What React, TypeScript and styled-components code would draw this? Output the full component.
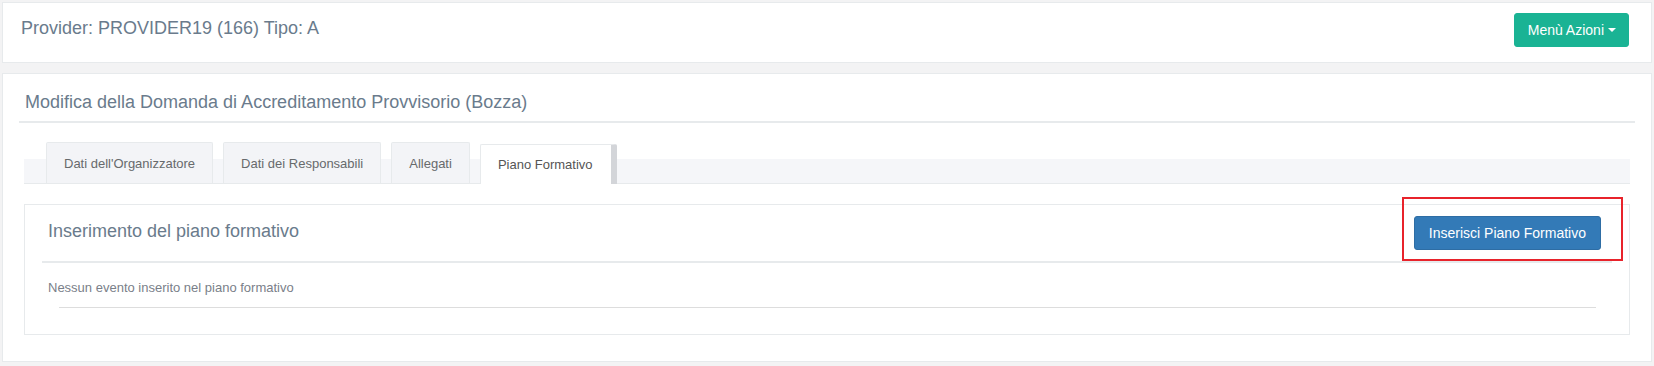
import React, { useState } from 'react';
import styled, { createGlobalStyle } from 'styled-components';

const GlobalStyle = createGlobalStyle`
  html, body {
    margin: 0;
    padding: 0;
    background: #f3f3f4;
  }
  body {
    font-family: 'Liberation Sans', Arial, sans-serif;
  }
`;

const Page = styled.div`
  padding: 2px 2px 0;
`;

const Box = styled.div`
  background: #fff;
  border: 1px solid #e7eaec;
  box-sizing: border-box;
`;

const TopBar = styled(Box)`
  height: 61px;
  display: flex;
  justify-content: space-between;
  align-items: flex-start;
  padding: 10px 22px 0 18px;
`;

const Heading = styled.div`
  font-size: 18px;
  line-height: 20px;
  color: #6a7b8c;
  margin-top: 5px;
`;

const MenuButton = styled.button`
  display: flex;
  align-items: center;
  height: 34px;
  padding: 0 12px 0 13px;
  background: #1ab394;
  border: 1px solid #1ab394;
  border-radius: 3px;
  color: #fff;
  font-family: inherit;
  font-size: 14px;
  cursor: pointer;
`;

const Caret = styled.span`
  display: inline-block;
  margin-left: 4px;
  border-top: 4px solid #fff;
  border-left: 4px solid transparent;
  border-right: 4px solid transparent;
`;

const MainBox = styled(Box)`
  margin-top: 10px;
  padding: 0 16px 26px;
`;

const MainHeader = styled.div`
  padding: 18px 6px 0;
  margin-bottom: 9px;
`;

const Rule = styled.div`
  height: 2px;
  background: #e7eaec;
`;

const TabArea = styled.div`
  margin: 19px 5px 0;
`;

const TabBar = styled.div`
  display: flex;
  align-items: flex-end;
  height: 41px;
  padding-left: 22px;
  background: linear-gradient(to bottom, transparent 17px, #f5f6f9 17px);
  border-bottom: 1px solid #e7eaec;
`;

const Tab = styled.div<{ $active?: boolean }>`
  display: flex;
  align-items: center;
  box-sizing: border-box;
  margin-right: 10px;
  padding: 0 ${(p) => (p.$active ? '18px' : '17px')} 0 17px;
  font-size: 13px;
  cursor: pointer;
  border: 1px solid #e7eaec;
  border-bottom: none;
  border-radius: 2px 2px 0 0;
  height: ${(p) => (p.$active ? '40px' : '41px')};
  margin-bottom: ${(p) => (p.$active ? '-1px' : '0')};
  background: ${(p) => (p.$active ? '#fff' : '#f3f4f7')};
  color: ${(p) => (p.$active ? '#555' : '#676a6c')};
  border-right: ${(p) => (p.$active ? '6px solid #d3d5d9' : '1px solid #e7eaec')};
`;

const Section = styled(Box)`
  margin-top: 20px;
  padding: 0 17px;
`;

const SectionHeader = styled.div`
  display: flex;
  justify-content: space-between;
  align-items: flex-start;
  padding: 11px 11px 11px 6px;
`;

const ButtonWrap = styled.div`
  position: relative;
`;

const Highlight = styled.div`
  position: absolute;
  top: -19px;
  left: -12px;
  right: -22px;
  bottom: -11px;
  border: 2px solid #e8232b;
  pointer-events: none;
`;

const PrimaryButton = styled.button`
  height: 34px;
  padding: 0 14px;
  background: #337ab7;
  border: 1px solid #2e6da4;
  border-radius: 3px;
  color: #fff;
  font-family: inherit;
  font-size: 14px;
  cursor: pointer;
`;

const SectionBody = styled.div`
  padding: 16px 16px 26px 6px;
`;

const EmptyText = styled.div`
  font-size: 13px;
  line-height: 18px;
  color: #7a8089;
`;

const RowLine = styled.div`
  margin: 10px 0 0 11px;
  height: 1px;
  background: #dddddd;
`;

const tabs = [
  "Dati dell'Organizzatore",
  'Dati dei Responsabili',
  'Allegati',
  'Piano Formativo',
];

const App = () => {
  const [active, setActive] = useState<string>('Piano Formativo');

  return (
    <Page>
      <GlobalStyle />
      <TopBar>
        <Heading>Provider: PROVIDER19 (166) Tipo: A</Heading>
        <MenuButton type="button">
          Menù Azioni
          <Caret />
        </MenuButton>
      </TopBar>
      <MainBox>
        <MainHeader>
          <Heading style={{ marginTop: 0 }}>
            Modifica della Domanda di Accreditamento Provvisorio (Bozza)
          </Heading>
        </MainHeader>
        <Rule />
        <TabArea>
          <TabBar>
            {tabs.map((t) => (
              <Tab key={t} $active={active === t} onClick={() => setActive(t)}>
                {t}
              </Tab>
            ))}
          </TabBar>
          <Section>
            <SectionHeader>
              <Heading>Inserimento del piano formativo</Heading>
              <ButtonWrap>
                <PrimaryButton type="button">Inserisci Piano Formativo</PrimaryButton>
                <Highlight />
              </ButtonWrap>
            </SectionHeader>
            <Rule />
            <SectionBody>
              <EmptyText>Nessun evento inserito nel piano formativo</EmptyText>
              <RowLine />
            </SectionBody>
          </Section>
        </TabArea>
      </MainBox>
    </Page>
  );
};

export default App;
